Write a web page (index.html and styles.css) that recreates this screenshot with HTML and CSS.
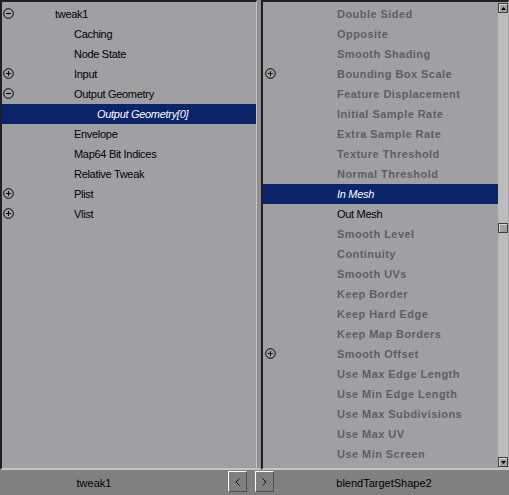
FILE: index.html
```html
<!DOCTYPE html>
<html lang="en">
<head>
    <meta charset="UTF-8">
    <title>Connection Editor</title>
    <link rel="stylesheet" href="styles.css">
</head>
<body>

    <!-- Panes -->
    <div class="panes">
        <div class="pane pane-left">
            <div class="row node"><span class="tog"><svg width="11" height="11" viewBox="0 0 11 11"><circle cx="5.5" cy="5.5" r="4.8" fill="none" stroke="#000"/><path d="M3 5.5h5" stroke="#000"/></svg></span><span class="label">tweak1</span></div>
            <div class="row"><span class="label">Caching</span></div>
            <div class="row"><span class="label">Node State</span></div>
            <div class="row"><span class="tog"><svg width="11" height="11" viewBox="0 0 11 11"><circle cx="5.5" cy="5.5" r="4.8" fill="none" stroke="#000"/><path d="M3 5.5h5M5.5 3v5" stroke="#000"/></svg></span><span class="label">Input</span></div>
            <div class="row"><span class="tog"><svg width="11" height="11" viewBox="0 0 11 11"><circle cx="5.5" cy="5.5" r="4.8" fill="none" stroke="#000"/><path d="M3 5.5h5" stroke="#000"/></svg></span><span class="label">Output Geometry</span></div>
            <div class="row selected sub"><span class="label">Output Geometry[0]</span></div>
            <div class="row"><span class="label">Envelope</span></div>
            <div class="row"><span class="label">Map64 Bit Indices</span></div>
            <div class="row"><span class="label">Relative Tweak</span></div>
            <div class="row"><span class="tog"><svg width="11" height="11" viewBox="0 0 11 11"><circle cx="5.5" cy="5.5" r="4.8" fill="none" stroke="#000"/><path d="M3 5.5h5M5.5 3v5" stroke="#000"/></svg></span><span class="label">Plist</span></div>
            <div class="row"><span class="tog"><svg width="11" height="11" viewBox="0 0 11 11"><circle cx="5.5" cy="5.5" r="4.8" fill="none" stroke="#000"/><path d="M3 5.5h5M5.5 3v5" stroke="#000"/></svg></span><span class="label">Vlist</span></div>
        </div>

        <div class="divider"></div>

        <div class="pane pane-right">
            <div class="list">
                <div class="row off"><span class="label">Double Sided</span></div>
                <div class="row off"><span class="label">Opposite</span></div>
                <div class="row off"><span class="label">Smooth Shading</span></div>
                <div class="row off"><span class="tog"><svg width="11" height="11" viewBox="0 0 11 11"><circle cx="5.5" cy="5.5" r="4.8" fill="none" stroke="#000"/><path d="M3 5.5h5M5.5 3v5" stroke="#000"/></svg></span><span class="label">Bounding Box Scale</span></div>
                <div class="row off"><span class="label">Feature Displacement</span></div>
                <div class="row off"><span class="label">Initial Sample Rate</span></div>
                <div class="row off"><span class="label">Extra Sample Rate</span></div>
                <div class="row off"><span class="label">Texture Threshold</span></div>
                <div class="row off"><span class="label">Normal Threshold</span></div>
                <div class="row selected"><span class="label">In Mesh</span></div>
                <div class="row"><span class="label">Out Mesh</span></div>
                <div class="row off"><span class="label">Smooth Level</span></div>
                <div class="row off"><span class="label">Continuity</span></div>
                <div class="row off"><span class="label">Smooth UVs</span></div>
                <div class="row off"><span class="label">Keep Border</span></div>
                <div class="row off"><span class="label">Keep Hard Edge</span></div>
                <div class="row off"><span class="label">Keep Map Borders</span></div>
                <div class="row off"><span class="tog"><svg width="11" height="11" viewBox="0 0 11 11"><circle cx="5.5" cy="5.5" r="4.8" fill="none" stroke="#000"/><path d="M3 5.5h5M5.5 3v5" stroke="#000"/></svg></span><span class="label">Smooth Offset</span></div>
                <div class="row off"><span class="label">Use Max Edge Length</span></div>
                <div class="row off"><span class="label">Use Min Edge Length</span></div>
                <div class="row off"><span class="label">Use Max Subdivisions</span></div>
                <div class="row off"><span class="label">Use Max UV</span></div>
                <div class="row off"><span class="label">Use Min Screen</span></div>
            </div>
            <!-- Barra de desplazamiento -->
            <div class="scrollbar">
                <div class="sb-btn"><svg width="5" height="3" viewBox="0 0 5 3"><path d="M2.5 0L5 3H0z" fill="#000"/></svg></div>
                <div class="sb-thumb"></div>
                <div class="sb-space"></div>
                <div class="sb-btn"><svg width="5" height="3" viewBox="0 0 5 3"><path d="M0 0H5L2.5 3z" fill="#000"/></svg></div>
            </div>
        </div>
    </div>

    <!-- Barra inferior -->
    <div class="statusbar">
        <div class="node-name left-name">tweak1</div>
        <button class="nav-btn"><svg width="5" height="8" viewBox="0 0 5 8"><path d="M4.5 0.5L1 4l3.5 3.5" fill="none" stroke="#000"/></svg></button>
        <button class="nav-btn"><svg width="5" height="8" viewBox="0 0 5 8"><path d="M0.5 0.5L4 4 0.5 7.5" fill="none" stroke="#000"/></svg></button>
        <div class="node-name right-name">blendTargetShape2</div>
    </div>

</body>
</html>
```

FILE: styles.css
```css
body {
    margin: 0;
    background-color: #808080;
    font-family: "Liberation Sans", Arial, sans-serif;
    font-size: 11px;
    color: #000;
}

/* Paneles */
.panes {
    display: flex;
    height: 470px;
}
.pane {
    background-color: #a0a0a4;
    border-top: 2px solid #202020;
    border-bottom: 2px solid #c4c4c4;
    padding-top: 2px;
    box-sizing: border-box;
}
.pane-left {
    width: 257px;
    border-left: 2px solid #202020;
    border-right: 1px solid #c4c4c4;
}
.divider {
    width: 4px;
    background-color: #909090;
    border-bottom: 2px solid #c4c4c4;
}
.pane-right {
    flex: 1;
    display: flex;
    border-left: 2px solid #202020;
    border-right: 1px solid #a8a8a8;
}
.list {
    flex: 1;
}

/* Filas */
.row {
    position: relative;
    height: 20px;
    line-height: 20px;
    white-space: nowrap;
    letter-spacing: -0.3px;
}
.tog {
    position: absolute;
    left: 1px;
    top: 4px;
    width: 11px;
    height: 11px;
}
.tog svg {
    display: block;
}
.pane-left .label {
    padding-left: 72px;
}
.pane-left .node .label {
    padding-left: 53px;
}
.pane-left .sub .label {
    padding-left: 95px;
}
.pane-right .tog {
    left: 2px;
}
.pane-right .label {
    padding-left: 74px;
}
.row.off {
    font-weight: bold;
    color: #5e5e5e;
    letter-spacing: 0.45px;
}
.row.selected {
    background-color: #0a246a;
    color: #fff;
    font-style: italic;
}

/* Barra de desplazamiento */
.scrollbar {
    width: 10px;
    margin-top: -1px;
    background-color: #bcbcbc;
    display: flex;
    flex-direction: column;
    padding-bottom: 1px;
}
.sb-btn, .sb-thumb {
    width: 10px;
    height: 10px;
    box-sizing: border-box;
    background-color: #a0a0a4;
    border: 1px solid #404040;
    box-shadow: inset 1px 1px 0 #d8d8d8;
    display: flex;
    align-items: center;
    justify-content: center;
}
.sb-thumb {
    margin-top: 210px;
}
.sb-space {
    flex: 1;
}

/* Barra inferior */
.statusbar {
    display: flex;
    align-items: center;
    height: 25px;
}
.node-name {
    text-align: center;
}
.left-name {
    width: 188px;
    margin-right: 40px;
}
.right-name {
    width: 204px;
}
.nav-btn {
    width: 19px;
    height: 21px;
    margin: 0 8px 2px 0;
    padding: 0;
    background-color: #808080;
    border: 1px solid;
    border-color: #fff #505050 #505050 #fff;
    display: flex;
    align-items: center;
    justify-content: center;
}
```
